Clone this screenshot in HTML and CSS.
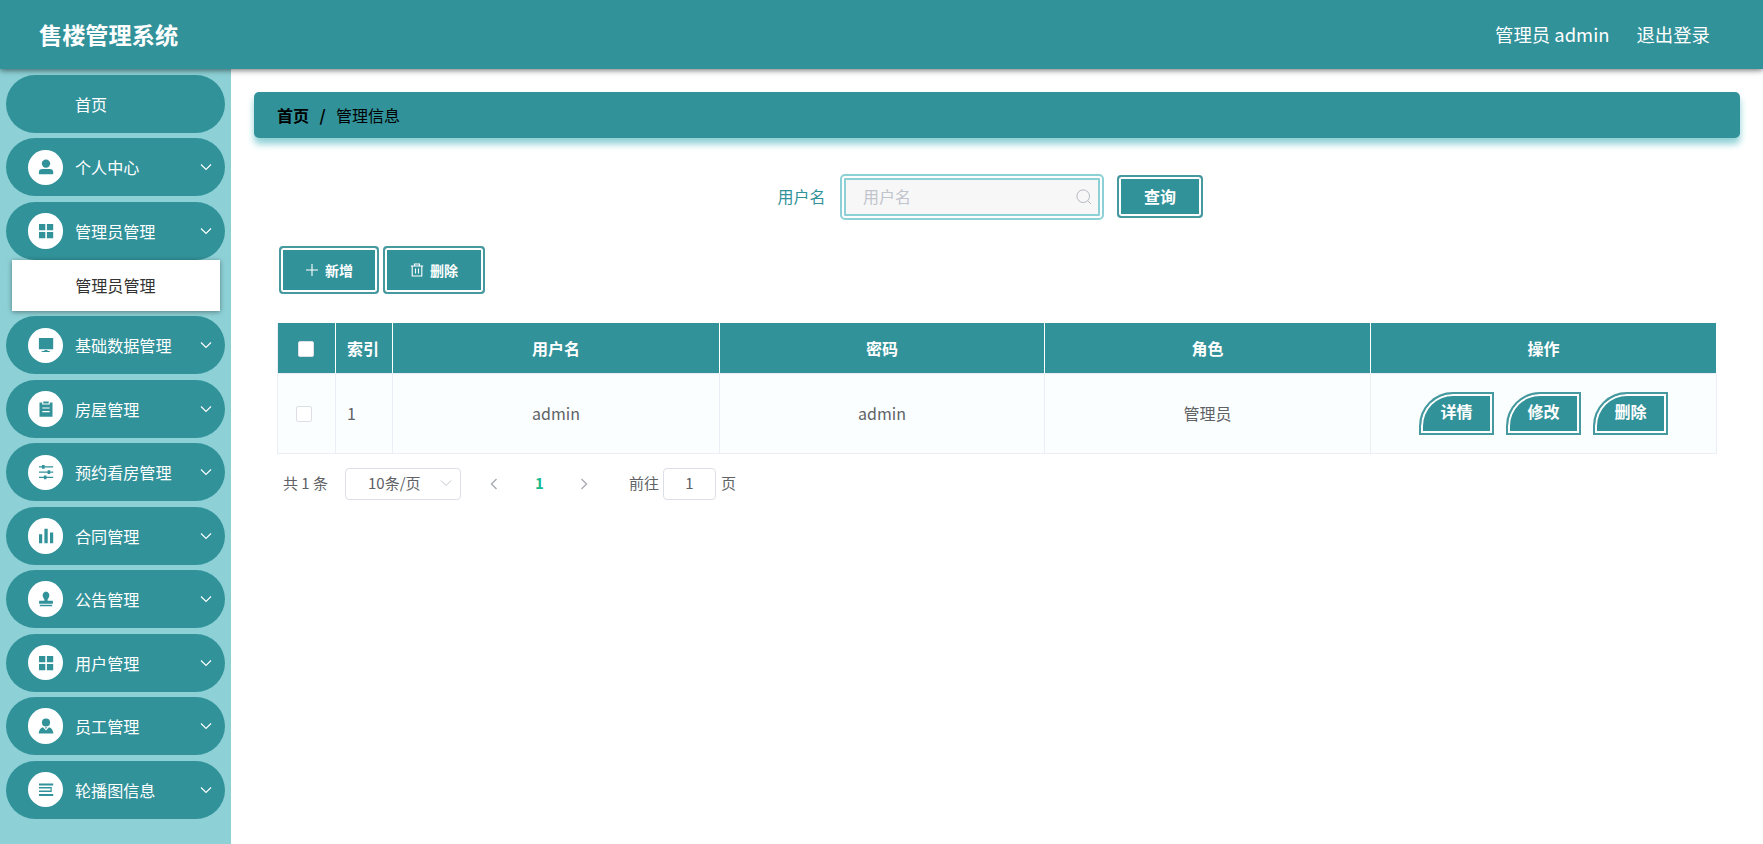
FILE: index.html
```
<!DOCTYPE html>
<html lang="zh-CN">
<head>
    <meta charset="UTF-8">
    <meta name="viewport" content="width=device-width, initial-scale=1.0">
    <title>售楼管理系统</title>
    <link rel="stylesheet" href="styles.css">
</head>
<body>
    <div class="header">
        <div class="title">售楼管理系统</div>
        <div class="user">
            <span>管理员 admin</span>
            <span class="logout">退出登录</span>
        </div>
    </div>
    <div class="container">
        <ul class="menu">
            <li class="item"><span class="name">首页</span></li>
            <li class="item">
                <span class="icon"><svg viewBox="0 0 16 16"><circle cx="8" cy="4.600" r="4.200"/><path d="M.9 15.300v-2q0-3.300 3.500-3.300h7.300q3.500 0 3.500 3.300v2z"/></svg></span>
                <span class="name">个人中心</span>
                <svg class="arrow" viewBox="0 0 12 8"><path d="M1 1.500l5 5 5-5"/></svg>
            </li>
            <li class="item">
                <span class="icon"><svg viewBox="0 0 16 16"><path d="M1 1h6.300v6.300H1zM8.900 1h6.300v6.300H8.900zM1 8.900h6.300v6.300H1zM8.900 8.900h6.300v6.300H8.900z"/></svg></span>
                <span class="name">管理员管理</span>
                <svg class="arrow" viewBox="0 0 12 8"><path d="M1 1.500l5 5 5-5"/></svg>
            </li>
            <li class="sub">管理员管理</li>
            <li class="item">
                <span class="icon"><svg viewBox="0 0 16 16"><path d="M.9 1h14.300v11.200H.9zM6.500 12.900h3v1.200h2.300v1H3.700v-1h2.800z"/></svg></span>
                <span class="name">基础数据管理</span>
                <svg class="arrow" viewBox="0 0 12 8"><path d="M1 1.500l5 5 5-5"/></svg>
            </li>
            <li class="item">
                <span class="icon"><svg viewBox="0 0 16 16"><path d="M1.500 1.500h2.700v2h7.600v-2h2.700v14.200h-13zM5.300.5h5.400v2H5.300z"/><path class="line" d="M4.300 7h7.400M4.300 10.600h7.400"/></svg></span>
                <span class="name">房屋管理</span>
                <svg class="arrow" viewBox="0 0 12 8"><path d="M1 1.500l5 5 5-5"/></svg>
            </li>
            <li class="item">
                <span class="icon"><svg viewBox="0 0 16 16"><path d="M1 2.200h14.200v1.200H1zM1 7.500h14.200v1.200H1zM1 12.800h14.200V14H1zM4 .9h2.600v3.800H4zM9.600 6.200h2.600V10H9.600zM5.900 11.500h2.600v3.800H5.900z"/></svg></span>
                <span class="name">预约看房管理</span>
                <svg class="arrow" viewBox="0 0 12 8"><path d="M1 1.500l5 5 5-5"/></svg>
            </li>
            <li class="item">
                <span class="icon"><svg viewBox="0 0 16 16"><path d="M1 6.300h3.200v9H1zM6.400.8h3.300v14.500H6.400zM12 4.400h3.200v10.900H12z"/></svg></span>
                <span class="name">合同管理</span>
                <svg class="arrow" viewBox="0 0 12 8"><path d="M1 1.500l5 5 5-5"/></svg>
            </li>
            <li class="item">
                <span class="icon"><svg viewBox="0 0 16 16"><path d="M6.500 9.700q.1-1.400-1.200-3A4 4 0 0 1 8 .5a4 4 0 0 1 2.700 6.200q-1.300 1.600-1.200 3h5.400v3.100H1.100V9.700zM1.800 13.700h12.400v1.600H1.800z"/></svg></span>
                <span class="name">公告管理</span>
                <svg class="arrow" viewBox="0 0 12 8"><path d="M1 1.500l5 5 5-5"/></svg>
            </li>
            <li class="item">
                <span class="icon"><svg viewBox="0 0 16 16"><path d="M1 1h6.300v6.300H1zM8.900 1h6.300v6.300H8.900zM1 8.900h6.300v6.300H1zM8.900 8.900h6.300v6.300H8.900z"/></svg></span>
                <span class="name">用户管理</span>
                <svg class="arrow" viewBox="0 0 12 8"><path d="M1 1.500l5 5 5-5"/></svg>
            </li>
            <li class="item">
                <span class="icon"><svg viewBox="0 0 16 16"><circle cx="8" cy="4.500" r="4.100"/><path d="M.6 15.500Q1.200 10.300 5 9.200L8 12.500l3-3.300q3.800 1.100 4.400 6.300z"/><path d="M7 9.200h2l-1 2z"/></svg></span>
                <span class="name">员工管理</span>
                <svg class="arrow" viewBox="0 0 12 8"><path d="M1 1.500l5 5 5-5"/></svg>
            </li>
            <li class="item">
                <span class="icon"><svg viewBox="0 0 16 16"><path d="M1 1.600h14.200v2H1zM1 5h11v1.500H1zM1 8.400h11v1.500H1zM1 12h14.200v2H1zM12 5h1.700v4.900H12V8.600h.5V6.300H12z"/></svg></span>
                <span class="name">轮播图信息</span>
                <svg class="arrow" viewBox="0 0 12 8"><path d="M1 1.500l5 5 5-5"/></svg>
            </li>
        </ul>
        <div class="main">
            <div class="crumb"><b>首页</b><i>/</i><span>管理信息</span></div>
            <div class="search">
                <label>用户名</label>
                <div class="input">
                    <span>用户名</span>
                    <svg viewBox="0 0 16 16"><circle cx="7.200" cy="7.200" r="6.300"/><path d="M11.800 11.800l3.200 3.200"/></svg>
                </div>
                <button class="btn query">查询</button>
            </div>
            <div class="actions">
                <button class="btn add"><svg viewBox="0 0 14 14"><path d="M7 1v12M1 7h12"/></svg>新增</button>
                <button class="btn del"><svg viewBox="0 0 14 14"><path d="M.8 3h12.400M4.500 3V1h5v2M2.200 3v10h9.600V3M5.500 5.500v5M8.500 5.500v5"/></svg>删除</button>
            </div>
            <table>
                <colgroup>
                    <col class="c1"><col class="c2"><col class="c3"><col class="c4"><col class="c5"><col>
                </colgroup>
                <tr>
                    <th><span class="check"></span></th>
                    <th class="index">索引</th>
                    <th>用户名</th>
                    <th>密码</th>
                    <th>角色</th>
                    <th>操作</th>
                </tr>
                <tr>
                    <td><span class="check"></span></td>
                    <td class="index">1</td>
                    <td>admin</td>
                    <td>admin</td>
                    <td>管理员</td>
                    <td>
                        <div class="ops">
                            <button>详情</button>
                            <button>修改</button>
                            <button>删除</button>
                        </div>
                    </td>
                </tr>
            </table>
            <div class="pages">
                <span class="total">共 1 条</span>
                <div class="size">10条/页<svg viewBox="0 0 12 8"><path d="M1 1.500l5 5 5-5"/></svg></div>
                <svg class="prev" viewBox="0 0 8 12"><path d="M6.500 1l-5 5 5 5"/></svg>
                <b>1</b>
                <svg class="next" viewBox="0 0 8 12"><path d="M1.500 1l5 5-5 5"/></svg>
                <span class="go">前往</span>
                <div class="num">1</div>
                <span>页</span>
            </div>
        </div>
    </div>
</body>
</html>
```
FILE: styles.css
```
*{
    box-sizing: border-box;
    margin: 0;
    padding: 0;
}
body{
    height: 844px;
    overflow: hidden;
    background: #fff;
    font: 16px/24px "Noto Sans CJK SC", sans-serif;
    color: #606266;
}
svg{
    display: block;
    fill: none;
    flex-shrink: 0;
}
.header{
    position: relative;
    height: 69px;
    padding: 0 53px 2px 39px;
    display: flex;
    align-items: center;
    justify-content: space-between;
    background: #32929a;
    color: #fff;
    box-shadow: 0 1px 6px rgba(0,0,0,.6);
}
.title{
    font-size: 23.2px;
    font-weight: bold;
}
.user{
    display: flex;
    font-size: 18.4px;
}
.logout{
    margin-left: 27px;
}
.container{
    display: flex;
    height: 775px;
}
.menu{
    width: 231px;
    padding: 6px 5px 0 5.7px;
    flex-shrink: 0;
    list-style: none;
    background: #8dd1d6;
}
.item{
    height: 57.7px;
    margin-bottom: 5.8px;
    padding-left: 22.3px;
    width: 219.3px;
    display: flex;
    align-items: center;
    border-radius: 34px;
    background: #32929a;
    color: #fff;
}
.icon{
    width: 35.5px;
    height: 35.5px;
    margin-right: 11.5px;
    display: flex;
    align-items: center;
    justify-content: center;
    border-radius: 50%;
    background: #fff;
}
.icon svg{
    width: 16px;
    height: 16px;
    fill: #32929a;
}
.icon .line{
    stroke: #fff;
    stroke-width: 1.2;
}
.name{
    font-size: 16.1px;
}
.item .name:first-child{
    margin-left: 47px;
}
.arrow{
    width: 12px;
    height: 8px;
    margin-left: auto;
    margin-right: 12.5px;
    stroke: #fff;
    stroke-width: 1.1;
}
.sub{
    height: 51px;
    width: 208px;
    margin: -5.8px 0 5.8px 6px;
    padding-left: 63.5px;
    font-size: 16.1px;
    line-height: 51px;
    background: #fff;
    color: #333;
    box-shadow: 0 1px 5px rgba(0,0,0,.4);
}
.main{
    flex: 1;
    padding: 23px 23px 0;
}
.crumb{
    height: 46px;
    padding-left: 23px;
    display: flex;
    align-items: center;
    border-radius: 5px;
    background: #32929a;
    box-shadow: 0 6px 7px #8dd1d6;
    color: #000;
}
.crumb i{
    width: 6px;
    margin: 0 10.5px;
    font-style: normal;
    font-weight: bold;
}
.search{
    height: 46px;
    margin-top: 36px;
    padding-left: 523.5px;
    display: flex;
    align-items: center;
}
.search label{
    width: 62.5px;
    padding-bottom: 2px;
    color: #32929a;
}
.input{
    width: 264px;
    height: 46px;
    padding: 0 6px 0 17px;
    display: flex;
    align-items: center;
    justify-content: space-between;
    border: 6px double #8dd1d6;
    border-radius: 5px;
    background: #f7f7f7;
    background-clip: padding-box;
    color: #c0c4cc;
}
.input span{
    padding-bottom: 2px;
}
.input svg{
    width: 16px;
    height: 16px;
    margin-bottom: 1px;
    stroke: #b4b8c0;
}
.btn{
    display: flex;
    align-items: center;
    justify-content: center;
    border: 2px solid #46999f;
    border-radius: 4px;
    background: #32929a;
    box-shadow: inset 0 0 0 2px #fff;
    color: #fff;
    font: bold 14px "Noto Sans CJK SC", sans-serif;
}
.query{
    width: 86px;
    height: 43px;
    margin: 0 0 2px 13px;
    font-size: 16px;
}
.actions{
    margin: 26px 0 29px 25px;
    display: flex;
    gap: 4px;
}
.actions .btn{
    height: 48px;
}
.btn svg{
    width: 14px;
    height: 14px;
    margin-right: 6px;
    stroke: #fff;
    stroke-width: 1.1;
}
.add{
    width: 100px;
}
.del{
    width: 102px;
}
table{
    width: 1440px;
    margin-left: 23px;
    table-layout: fixed;
    border-collapse: collapse;
}
.c1{
    width: 58px;
}
.c2{
    width: 57px;
}
.c3{
    width: 327px;
}
.c4{
    width: 325px;
}
.c5{
    width: 326px;
}
th{
    height: 50px;
    border: 1px solid #fff;
    border-width: 0 1px;
    background: #32929a;
    color: #fff;
}
th:first-child{
    border-left-color: #ebeef5;
}
td{
    height: 80px;
    border: 1px solid #ebeef5;
    background: #fbfefe;
    text-align: center;
}
.index{
    padding-left: 11px;
    text-align: left;
}
.check{
    width: 16px;
    height: 16px;
    display: block;
    margin: 2px auto 0 18px;
    border: 1px solid #dcdfe6;
    border-radius: 2px;
    background: #fff;
}
th .check{
    margin-left: 20px;
}
.ops{
    display: flex;
    justify-content: center;
    gap: 12.5px;
}
.ops button{
    width: 74.5px;
    height: 43px;
    padding-bottom: 5px;
    border: 2px solid #46999f;
    border-radius: 34px 0 0 0;
    background: #32929a;
    box-shadow: inset 0 0 0 2px #fff;
    color: #fff;
    font: bold 16px "Noto Sans CJK SC", sans-serif;
}
.pages{
    height: 32px;
    margin: 14px 0 0 29px;
    display: flex;
    align-items: center;
    font-size: 15px;
    line-height: 22px;
}
.pages span,.pages b{
    padding-bottom: 1px;
}
.total{
    width: 62px;
}
.size{
    width: 116px;
    height: 32px;
    padding: 0 8px 1px 22px;
    display: flex;
    align-items: center;
    justify-content: space-between;
    border: 1px solid #dcdfe6;
    border-radius: 4px;
}
.size svg{
    width: 12px;
    height: 8px;
    stroke: #c0c4cc;
}
.prev,.next{
    width: 8px;
    height: 12px;
    stroke: #a8abb2;
    stroke-width: 1.4;
}
.prev{
    margin-left: 29px;
}
.pages b{
    width: 9px;
    margin: 0 36px 0 37px;
    color: #18ba8f;
}
.go{
    margin-left: 41px;
}
.num{
    width: 53px;
    height: 32px;
    margin: 0 5px 0 4px;
    border: 1px solid #dcdfe6;
    border-radius: 4px;
    line-height: 28px;
    text-align: center;
}
```
